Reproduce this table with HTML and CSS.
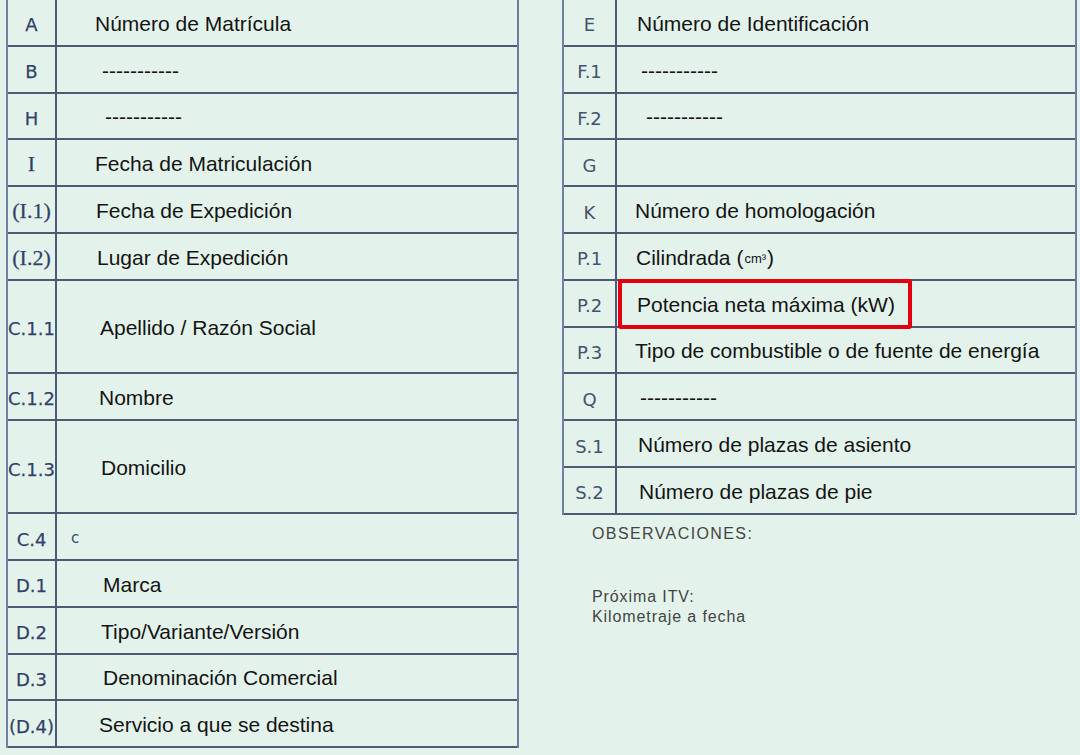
FILE: index.html
```html
<!DOCTYPE html>
<html lang="es">
<head>
<meta charset="utf-8">
<title>Permiso de circulación</title>
<link rel="stylesheet" href="styles.css">
</head>
<body>
<div class="sheet">
  <section class="panel panel-left">
    <div class="table table-left">
      <div class="row"><div class="code">A</div><div class="field pad-38">Número de Matrícula</div></div>
      <div class="row"><div class="code">B</div><div class="field pad-45">-----------</div></div>
      <div class="row"><div class="code">H</div><div class="field pad-48">-----------</div></div>
      <div class="row"><div class="code serif">I</div><div class="field pad-38">Fecha de Matriculación</div></div>
      <div class="row"><div class="code serif">(I.1)</div><div class="field pad-39">Fecha de Expedición</div></div>
      <div class="row"><div class="code serif">(I.2)</div><div class="field pad-40">Lugar de Expedición</div></div>
      <div class="row tall"><div class="code edge">C.1.1</div><div class="field pad-43">Apellido / Razón Social</div></div>
      <div class="row"><div class="code edge">C.1.2</div><div class="field pad-42">Nombre</div></div>
      <div class="row tall"><div class="code edge">C.1.3</div><div class="field pad-44">Domicilio</div></div>
      <div class="row"><div class="code">C.4</div><div class="field pad-14"><span class="mark">c</span></div></div>
      <div class="row"><div class="code">D.1</div><div class="field pad-46">Marca</div></div>
      <div class="row"><div class="code">D.2</div><div class="field pad-44">Tipo/Variante/Versión</div></div>
      <div class="row"><div class="code">D.3</div><div class="field pad-46">Denominación Comercial</div></div>
      <div class="row"><div class="code">(D.4)</div><div class="field pad-42">Servicio a que se destina</div></div>
    </div>
  </section>

  <section class="panel panel-right">
    <div class="table table-right">
      <div class="row"><div class="code">E</div><div class="field pad-20">Número de Identificación</div></div>
      <div class="row"><div class="code">F.1</div><div class="field pad-24">-----------</div></div>
      <div class="row"><div class="code">F.2</div><div class="field pad-29">-----------</div></div>
      <div class="row"><div class="code">G</div><div class="field"></div></div>
      <div class="row"><div class="code">K</div><div class="field pad-18">Número de homologación</div></div>
      <div class="row"><div class="code">P.1</div><div class="field pad-19">Cilindrada (<span class="unit">cm³</span>)</div></div>
      <div class="row"><div class="code">P.2</div><div class="field pad-20 marked">Potencia neta máxima (kW)<span class="highlight"></span></div></div>
      <div class="row"><div class="code">P.3</div><div class="field pad-18">Tipo de combustible o de fuente de energía</div></div>
      <div class="row"><div class="code">Q</div><div class="field pad-23">-----------</div></div>
      <div class="row"><div class="code">S.1</div><div class="field pad-21">Número de plazas de asiento</div></div>
      <div class="row"><div class="code">S.2</div><div class="field pad-22">Número de plazas de pie</div></div>
    </div>

    <div class="notes">
      <p class="notes-title">OBSERVACIONES:</p>
      <p class="notes-line">Próxima ITV:</p>
      <p class="notes-line">Kilometraje a fecha</p>
    </div>
  </section>
</div>
</body>
</html>
```

FILE: styles.css
```css
html, body {
  margin: 0;
  padding: 0;
}

body {
  width: 1080px;
  height: 755px;
  overflow: hidden;
  background: #e3f3eb;
  font-family: "Liberation Sans", Arial, sans-serif;
  color: #141414;
}

.sheet {
  display: flex;
  gap: 43px;
  padding-left: 6px;
  height: 755px;
}

.panel {
  display: flex;
  flex-direction: column;
}

.panel-left {
  width: 513px;
}

.panel-right {
  width: 515px;
}

.table {
  box-sizing: border-box;
  border-left: 2px solid #6f82a4;
  border-right: 2px solid #6b7ea0;
}

.row {
  display: flex;
  box-sizing: border-box;
  height: 46.75px;
  border-bottom: 2px solid #4c5a74;
}

.table-right .row {
  height: 46.8px;
}

.row.tall {
  height: 93.5px;
}

.code {
  flex: none;
  box-sizing: border-box;
  width: 49px;
  padding-top: 5px;
  display: flex;
  align-items: center;
  justify-content: center;
  border-right: 2px solid #4a5a78;
  font-family: "DejaVu Sans", Verdana, sans-serif;
  font-size: 18px;
  color: #33416a;
  -webkit-text-stroke: 0.25px #33416a;
  white-space: nowrap;
}

.table-right .code {
  width: 53px;
  color: #44526f;
  -webkit-text-stroke: 0;
}

.code.serif {
  font-family: "Liberation Serif", "Times New Roman", serif;
  font-size: 22px;
  padding-top: 3px;
}

.code.edge {
  justify-content: flex-start;
  padding-left: 0;
}

.field {
  flex: 1;
  display: flex;
  align-items: center;
  padding-top: 3px;
  font-size: 21px;
  white-space: nowrap;
}

.pad-14 { padding-left: 14px; }
.pad-18 { padding-left: 18px; }
.pad-19 { padding-left: 19px; }
.pad-20 { padding-left: 20px; }
.pad-21 { padding-left: 21px; }
.pad-22 { padding-left: 22px; }
.pad-23 { padding-left: 23px; }
.pad-24 { padding-left: 24px; }
.pad-29 { padding-left: 29px; }
.pad-38 { padding-left: 38px; }
.pad-39 { padding-left: 39px; }
.pad-40 { padding-left: 40px; }
.pad-42 { padding-left: 42px; }
.pad-43 { padding-left: 43px; }
.pad-44 { padding-left: 44px; }
.pad-45 { padding-left: 45px; }
.pad-46 { padding-left: 46px; }
.pad-48 { padding-left: 48px; }

.mark {
  font-family: "DejaVu Sans", Verdana, sans-serif;
  font-size: 15px;
  color: #3b496a;
}

.unit {
  font-size: 13px;
  padding: 0 1px;
  position: relative;
  top: 1px;
}

.marked {
  position: relative;
}

.highlight {
  position: absolute;
  left: 1px;
  top: -2px;
  width: 294px;
  height: 50px;
  box-sizing: border-box;
  border: 4px solid #e3000f;
  border-radius: 3px;
}

.notes {
  padding-left: 30px;
  padding-top: 9px;
  color: #444;
  font-size: 16px;
  letter-spacing: 0.9px;
  line-height: 20px;
}

.notes p {
  margin: 0;
}

.notes .notes-title {
  letter-spacing: 1.4px;
  margin-bottom: 43px;
}
```
